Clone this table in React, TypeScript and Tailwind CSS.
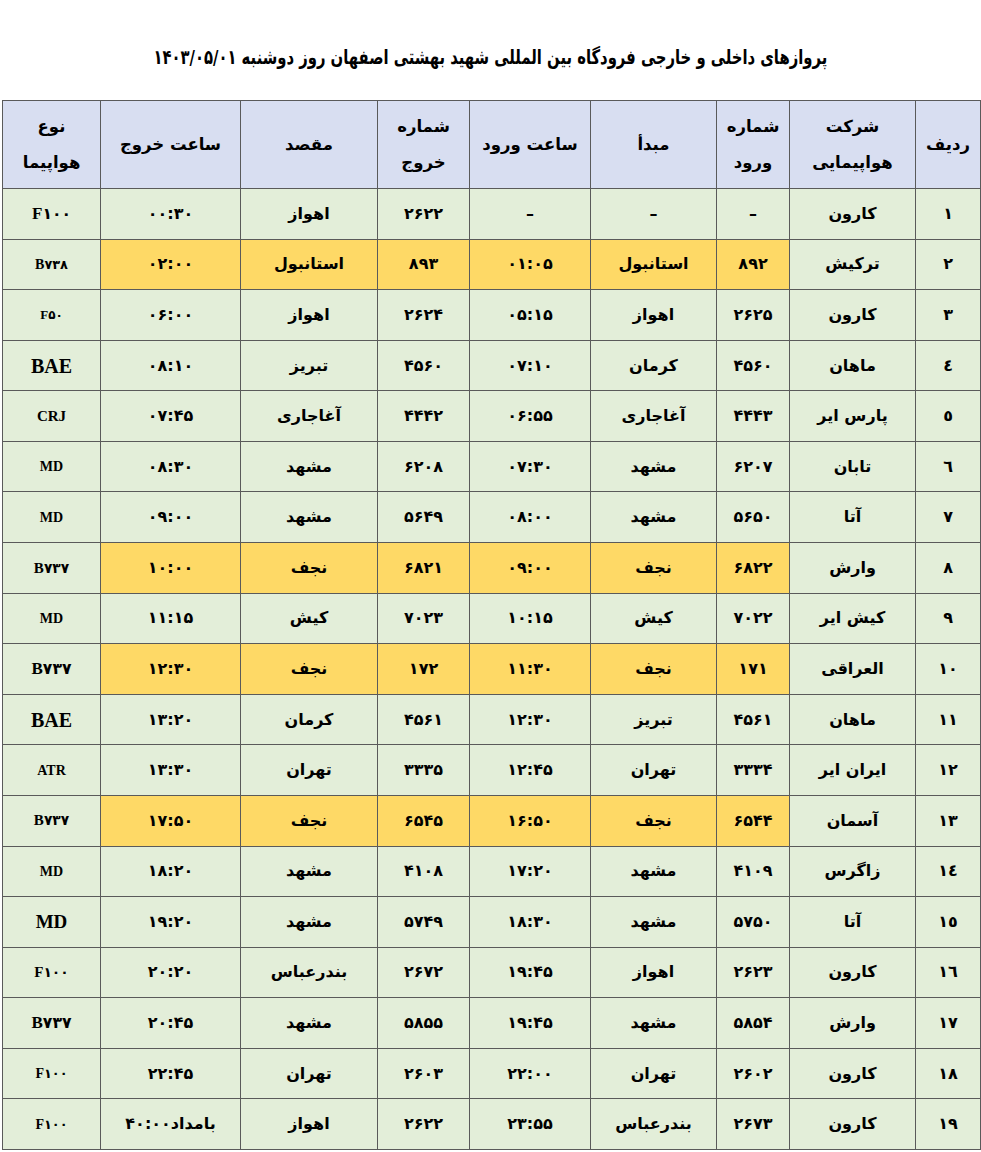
import React from "react";

type Row = {
  n: string;
  airline: string;
  inNo: string;
  origin: string;
  inTime: string;
  outNo: string;
  dest: string;
  outTime: React.ReactNode;
  ac: React.ReactNode;
  y?: boolean;
};

const AC = ({ l, d, size }: { l: string; d?: string; size: string }) => (
  <span dir="ltr" className={`font-bold ${size}`} style={{ fontFamily: '"Liberation Serif", "DejaVu Sans", serif' }}>
    {l}
    {d ? <span className="text-[0.92em]" style={{ fontFamily: '"DejaVu Sans", sans-serif' }}>{d}</span> : null}
  </span>
);

const rows: Row[] = [
  { n: "١", airline: "کارون", inNo: "–", origin: "–", inTime: "–", outNo: "۲۶۲۲", dest: "اهواز", outTime: "۰۰:۳۰", ac: <AC l="F" d="۱۰۰" size="text-[17px]" /> },
  { n: "٢", airline: "ترکیش", inNo: "۸۹۲", origin: "استانبول", inTime: "۰۱:۰۵", outNo: "۸۹۳", dest: "استانبول", outTime: "۰۲:۰۰", ac: <AC l="B" d="۷۳۸" size="text-[14px]" />, y: true },
  { n: "٣", airline: "کارون", inNo: "۲۶۲۵", origin: "اهواز", inTime: "۰۵:۱۵", outNo: "۲۶۲۴", dest: "اهواز", outTime: "۰۶:۰۰", ac: <AC l="F" d="۵۰" size="text-[13px]" /> },
  { n: "٤", airline: "ماهان", inNo: "۴۵۶۰", origin: "کرمان", inTime: "۰۷:۱۰", outNo: "۴۵۶۰", dest: "تبریز", outTime: "۰۸:۱۰", ac: <AC l="BAE" size="text-[20px]" /> },
  { n: "٥", airline: "پارس ایر", inNo: "۴۴۴۳", origin: "آغاجاری", inTime: "۰۶:۵۵", outNo: "۴۴۴۲", dest: "آغاجاری", outTime: "۰۷:۴۵", ac: <AC l="CRJ" size="text-[15px]" /> },
  { n: "٦", airline: "تابان", inNo: "۶۲۰۷", origin: "مشهد", inTime: "۰۷:۳۰", outNo: "۶۲۰۸", dest: "مشهد", outTime: "۰۸:۳۰", ac: <AC l="MD" size="text-[14px]" /> },
  { n: "٧", airline: "آتا", inNo: "۵۶۵۰", origin: "مشهد", inTime: "۰۸:۰۰", outNo: "۵۶۴۹", dest: "مشهد", outTime: "۰۹:۰۰", ac: <AC l="MD" size="text-[14px]" /> },
  { n: "٨", airline: "وارش", inNo: "۶۸۲۲", origin: "نجف", inTime: "۰۹:۰۰", outNo: "۶۸۲۱", dest: "نجف", outTime: "۱۰:۰۰", ac: <AC l="B" d="۷۳۷" size="text-[15px]" />, y: true },
  { n: "٩", airline: "کیش ایر", inNo: "۷۰۲۲", origin: "کیش", inTime: "۱۰:۱۵", outNo: "۷۰۲۳", dest: "کیش", outTime: "۱۱:۱۵", ac: <AC l="MD" size="text-[14px]" /> },
  { n: "١٠", airline: "العراقی", inNo: "۱۷۱", origin: "نجف", inTime: "۱۱:۳۰", outNo: "۱۷۲", dest: "نجف", outTime: "۱۲:۳۰", ac: <AC l="B" d="۷۳۷" size="text-[17px]" />, y: true },
  { n: "١١", airline: "ماهان", inNo: "۴۵۶۱", origin: "تبریز", inTime: "۱۲:۳۰", outNo: "۴۵۶۱", dest: "کرمان", outTime: "۱۳:۲۰", ac: <AC l="BAE" size="text-[20px]" /> },
  { n: "١٢", airline: "ایران ایر", inNo: "۳۳۳۴", origin: "تهران", inTime: "۱۲:۴۵", outNo: "۳۳۳۵", dest: "تهران", outTime: "۱۳:۳۰", ac: <AC l="ATR" size="text-[14px]" /> },
  { n: "١٣", airline: "آسمان", inNo: "۶۵۴۴", origin: "نجف", inTime: "۱۶:۵۰", outNo: "۶۵۴۵", dest: "نجف", outTime: "۱۷:۵۰", ac: <AC l="B" d="۷۳۷" size="text-[15px]" />, y: true },
  { n: "١٤", airline: "زاگرس", inNo: "۴۱۰۹", origin: "مشهد", inTime: "۱۷:۲۰", outNo: "۴۱۰۸", dest: "مشهد", outTime: "۱۸:۲۰", ac: <AC l="MD" size="text-[14px]" /> },
  { n: "١٥", airline: "آتا", inNo: "۵۷۵۰", origin: "مشهد", inTime: "۱۸:۳۰", outNo: "۵۷۴۹", dest: "مشهد", outTime: "۱۹:۲۰", ac: <AC l="MD" size="text-[19px]" /> },
  { n: "١٦", airline: "کارون", inNo: "۲۶۲۳", origin: "اهواز", inTime: "۱۹:۴۵", outNo: "۲۶۷۲", dest: "بندرعباس", outTime: "۲۰:۲۰", ac: <AC l="F" d="۱۰۰" size="text-[15px]" /> },
  { n: "١٧", airline: "وارش", inNo: "۵۸۵۴", origin: "مشهد", inTime: "۱۹:۴۵", outNo: "۵۸۵۵", dest: "مشهد", outTime: "۲۰:۴۵", ac: <AC l="B" d="۷۳۷" size="text-[17px]" /> },
  { n: "١٨", airline: "کارون", inNo: "۲۶۰۲", origin: "تهران", inTime: "۲۲:۰۰", outNo: "۲۶۰۳", dest: "تهران", outTime: "۲۲:۴۵", ac: <AC l="F" d="۱۰۰" size="text-[14px]" /> },
  {
    n: "١٩", airline: "کارون", inNo: "۲۶۷۳", origin: "بندرعباس", inTime: "۲۳:۵۵", outNo: "۲۶۲۲", dest: "اهواز",
    outTime: (
      <span dir="ltr" className="flex flex-row items-center">
        <span>۴۰:۰۰</span>
        <span dir="rtl">بامداد</span>
      </span>
    ),
    ac: <AC l="F" d="۱۰۰" size="text-[14px]" />,
  },
];

const headers: React.ReactNode[] = [
  "ردیف",
  <>شرکت<br />هواپیمایی</>,
  <>شماره<br />ورود</>,
  "مبدأ",
  "ساعت ورود",
  <>شماره<br />خروج</>,
  "مقصد",
  "ساعت خروج",
  <>نوع<br />هواپیما</>,
];

const G = "bg-[#e3eed9]";
const Y = "bg-[#fed966]";
const H = "bg-[#d8def1]";

export default function App() {
  return (
    <div className="w-[981px] h-[1152px] bg-white text-black overflow-hidden" style={{ fontFamily: '"DejaVu Sans", sans-serif' }}>
      <div className="h-[100px] flex items-start justify-center pt-[42px]">
        <h1 dir="rtl" className="text-[20px] font-bold leading-[30px] scale-x-[0.74] whitespace-nowrap">
          پروازهای داخلی و خارجی فرودگاه بین المللی شهید بهشتی اصفهان روز دوشنبه ۱۴۰۳/۰۵/۰۱
        </h1>
      </div>
      <div className="pl-[2px]">
        <div
          dir="rtl"
          className="w-[979px] h-[1050px] grid gap-px bg-[#5a5a5a] p-px grid-cols-[64px_125px_72px_125px_120px_91px_136px_139px_97px] grid-rows-[87px_repeat(19,minmax(0,1fr))]"
        >
          {headers.map((h, i) => (
            <div key={i} className={`${H} flex items-center justify-center text-center text-[16.5px] font-bold leading-[36px]`}>
              <span>{h}</span>
            </div>
          ))}
          {rows.map((r, i) => {
            const c = r.y ? Y : G;
            const cell = "flex items-center justify-center text-[16px] font-bold";
            return (
              <React.Fragment key={i}>
                <div className={`${G} ${cell}`}>{r.n}</div>
                <div className={`${G} ${cell}`}>{r.airline}</div>
                <div className={`${c} ${cell}`}>{r.inNo}</div>
                <div className={`${c} ${cell}`}>{r.origin}</div>
                <div className={`${c} ${cell}`}><span dir="ltr">{r.inTime}</span></div>
                <div className={`${c} ${cell}`}>{r.outNo}</div>
                <div className={`${c} ${cell}`}>{r.dest}</div>
                <div className={`${c} ${cell}`}>{typeof r.outTime === "string" ? <span dir="ltr">{r.outTime}</span> : r.outTime}</div>
                <div className={`${G} ${cell}`}>{r.ac}</div>
              </React.Fragment>
            );
          })}
        </div>
      </div>
    </div>
  );
}
